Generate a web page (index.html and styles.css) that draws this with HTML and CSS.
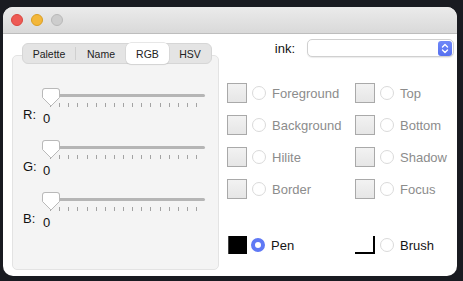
FILE: index.html
```html
<!DOCTYPE html>
<html lang="en">
<head>
    <meta charset="UTF-8">
    <title>Colour Chooser</title>
    <link rel="stylesheet" href="styles.css">
</head>
<body>
    <div class="window">
        <div class="titlebar">
            <span class="light red"></span>
            <span class="light yellow"></span>
            <span class="light gray"></span>
        </div>
        <div class="content">
            <div class="left">
                <div class="tabs">
                    <span class="tab tab-palette">Palette</span>
                    <span class="tab tab-name">Name</span>
                    <span class="tab tab-rgb selected">RGB</span>
                    <span class="tab tab-hsv">HSV</span>
                </div>
                <div class="group">
                    <div class="slider">
                        <div class="track-wrap">
                            <div class="track"></div>
                            <div class="ticks">
                                <span></span><span></span><span></span><span></span><span></span><span></span>
                                <span></span><span></span><span></span><span></span><span></span><span></span>
                                <span></span><span></span><span></span><span></span><span></span>
                            </div>
                            <svg class="thumb" width="18" height="19" viewBox="0 0 18 19">
                                <path d="M3 0.5 H15 Q17.5 0.5 17.5 3 V9.5 L9 18 L0.5 9.5 V3 Q0.5 0.5 3 0.5 Z" fill="#fff" stroke="#b9b9b9"/>
                            </svg>
                        </div>
                        <div class="value-row"><span class="axis">R:</span><span class="value">0</span></div>
                    </div>
                    <div class="slider">
                        <div class="track-wrap">
                            <div class="track"></div>
                            <div class="ticks">
                                <span></span><span></span><span></span><span></span><span></span><span></span>
                                <span></span><span></span><span></span><span></span><span></span><span></span>
                                <span></span><span></span><span></span><span></span><span></span>
                            </div>
                            <svg class="thumb" width="18" height="19" viewBox="0 0 18 19">
                                <path d="M3 0.5 H15 Q17.5 0.5 17.5 3 V9.5 L9 18 L0.5 9.5 V3 Q0.5 0.5 3 0.5 Z" fill="#fff" stroke="#b9b9b9"/>
                            </svg>
                        </div>
                        <div class="value-row"><span class="axis">G:</span><span class="value">0</span></div>
                    </div>
                    <div class="slider">
                        <div class="track-wrap">
                            <div class="track"></div>
                            <div class="ticks">
                                <span></span><span></span><span></span><span></span><span></span><span></span>
                                <span></span><span></span><span></span><span></span><span></span><span></span>
                                <span></span><span></span><span></span><span></span><span></span>
                            </div>
                            <svg class="thumb" width="18" height="19" viewBox="0 0 18 19">
                                <path d="M3 0.5 H15 Q17.5 0.5 17.5 3 V9.5 L9 18 L0.5 9.5 V3 Q0.5 0.5 3 0.5 Z" fill="#fff" stroke="#b9b9b9"/>
                            </svg>
                        </div>
                        <div class="value-row"><span class="axis">B:</span><span class="value">0</span></div>
                    </div>
                </div>
            </div>
            <div class="right">
                <div class="ink-row">
                    <span class="ink-label">ink:</span>
                    <div class="select">
                        <span class="stepper">
                            <svg width="14" height="15" viewBox="0 0 14 15">
                                <path d="M4.5 6 L7 3.5 L9.5 6" fill="none" stroke="#fff" stroke-width="1.4" stroke-linecap="round" stroke-linejoin="round"/>
                                <path d="M4.5 9 L7 11.5 L9.5 9" fill="none" stroke="#fff" stroke-width="1.4" stroke-linecap="round" stroke-linejoin="round"/>
                            </svg>
                        </span>
                    </div>
                </div>
                <div class="colours">
                    <div class="item"><span class="swatch"></span><span class="radio"></span><span class="label">Foreground</span></div>
                    <div class="item"><span class="swatch"></span><span class="radio"></span><span class="label">Top</span></div>
                    <div class="item"><span class="swatch"></span><span class="radio"></span><span class="label">Background</span></div>
                    <div class="item"><span class="swatch"></span><span class="radio"></span><span class="label">Bottom</span></div>
                    <div class="item"><span class="swatch"></span><span class="radio"></span><span class="label">Hilite</span></div>
                    <div class="item"><span class="swatch"></span><span class="radio"></span><span class="label">Shadow</span></div>
                    <div class="item"><span class="swatch"></span><span class="radio"></span><span class="label">Border</span></div>
                    <div class="item"><span class="swatch"></span><span class="radio"></span><span class="label">Focus</span></div>
                </div>
                <div class="tools">
                    <div class="item"><span class="pen-icon"></span><span class="radio checked"></span><span class="label dark">Pen</span></div>
                    <div class="item"><span class="brush-icon"></span><span class="radio"></span><span class="label dark">Brush</span></div>
                </div>
            </div>
        </div>
    </div>
</body>
</html>
```

FILE: styles.css
```css
* {
    box-sizing: border-box;
}

body {
    margin: 0;
    height: 281px;
    padding: 7px 0 0 3px;
    background: #191b21;
    font-family: "Liberation Sans", Arial, sans-serif;
    overflow: hidden;
}

.window {
    width: 454px;
    height: 269px;
    background: #ffffff;
    border-radius: 10px;
    overflow: hidden;
}

.titlebar {
    height: 27px;
    display: flex;
    align-items: center;
    gap: 8px;
    padding-left: 8px;
    background: linear-gradient(#ebebeb, #d9d9d9);
    border-bottom: 1px solid #bdbdbd;
}

.light {
    width: 12px;
    height: 12px;
    border-radius: 50%;
}

.red {
    background: #ee5b55;
    border: 1px solid #d9463f;
}

.yellow {
    background: #f3b73a;
    border: 1px solid #d99e22;
}

.gray {
    background: #cdcdcd;
    border: 1px solid #b8b8b8;
}

.content {
    display: flex;
    padding: 5px 0 0 9px;
}

/* left side: tabs and sliders */

.left {
    width: 207px;
    margin-top: 4px;
}

.tabs {
    position: relative;
    z-index: 1;
    display: flex;
    width: 190px;
    height: 21px;
    margin-left: 10px;
    background: #e4e4e4;
    border: 1px solid #d6d6d6;
    border-radius: 6px;
    font-size: 10.5px;
    color: #222;
}

.tab {
    display: flex;
    align-items: center;
    justify-content: center;
    height: 100%;
}

.tab-palette {
    width: 53px;
    border-right: 1px solid #cfcfcf;
    margin: 3px 0;
    height: auto;
}

.tab-name {
    width: 50px;
}

.tab-rgb {
    width: 43px;
}

.tab-hsv {
    flex: 1;
}

.tab.selected {
    background: #ffffff;
    border-radius: 5px;
    margin: -1px 0;
    height: 21px;
    box-shadow: 0 0 0 0.5px #cfcfcf, 0 1px 1px rgba(0, 0, 0, 0.12);
}

.group {
    height: 215px;
    margin-top: -9px;
    padding-top: 33px;
    background: #f4f4f4;
    border: 1px solid #e3e3e3;
    border-radius: 5px;
}

.slider {
    height: 52px;
}

.track-wrap {
    position: relative;
    width: 163px;
    height: 18px;
    padding-top: 5px;
    margin-left: 29px;
}

.track {
    height: 3px;
    background: #b5b5b5;
    border-radius: 2px;
}

.ticks {
    display: flex;
    justify-content: space-between;
    width: 147px;
    margin: 6px 0 0 8px;
}

.ticks span {
    width: 1px;
    height: 4px;
    background: #a3a3a3;
}

.thumb {
    position: absolute;
    left: 0;
    top: -1px;
    filter: drop-shadow(0 0.5px 0.5px rgba(0, 0, 0, 0.15));
}

.value-row {
    display: flex;
    align-items: flex-start;
    font-size: 13px;
    line-height: 15px;
    color: #111;
}

.axis {
    margin-left: 10px;
    width: 20px;
}

.value {
    padding-top: 4px;
}

/* right side: ink and colour slots */

.right {
    width: 227px;
    margin-left: 8px;
}

.ink-row {
    display: flex;
    justify-content: flex-end;
    align-items: center;
    height: 18px;
    font-size: 13px;
    color: #111;
}

.ink-label {
    margin-right: 12px;
}

.select {
    display: flex;
    justify-content: flex-end;
    align-items: center;
    width: 147px;
    height: 18px;
    padding-right: 1px;
    background: #fff;
    border: 1px solid #d0d0d0;
    border-radius: 5px;
    box-shadow: 0 1px 1px rgba(0, 0, 0, 0.08);
}

.stepper {
    display: flex;
    width: 14px;
    height: 15px;
    background: linear-gradient(#6f88f8, #5670f0);
    border-radius: 3px;
}

.colours {
    display: grid;
    grid-template-columns: 128px 1fr;
    row-gap: 12px;
    margin-top: 26px;
}

.item {
    display: flex;
    align-items: center;
    height: 20px;
    font-size: 13px;
}

.swatch {
    width: 20px;
    height: 20px;
    border: 1px solid #a9a9a9;
    background: linear-gradient(#f2f2f2, #e6e6e6);
}

.radio {
    width: 14px;
    height: 14px;
    margin-left: 5px;
    border: 1px solid #dadada;
    border-radius: 50%;
    background: #fff;
}

.radio.checked {
    border: 4px solid #5f79f5;
    background: #fff;
}

.label {
    margin-left: 6px;
    color: #8c8c8c;
}

.label.dark {
    color: #151515;
}

.tools {
    display: grid;
    grid-template-columns: 128px 1fr;
    margin-top: 36px;
}

.pen-icon {
    width: 19px;
    height: 18px;
    margin-left: 1px;
    margin-right: -1px;
    background: #000;
    border-left: 1px solid #444;
}

.brush-icon {
    width: 20px;
    height: 18px;
    padding-left: 2px;
    border-right: 2px solid #000;
    border-bottom: 2px solid #000;
    background-clip: content-box;
}
```
